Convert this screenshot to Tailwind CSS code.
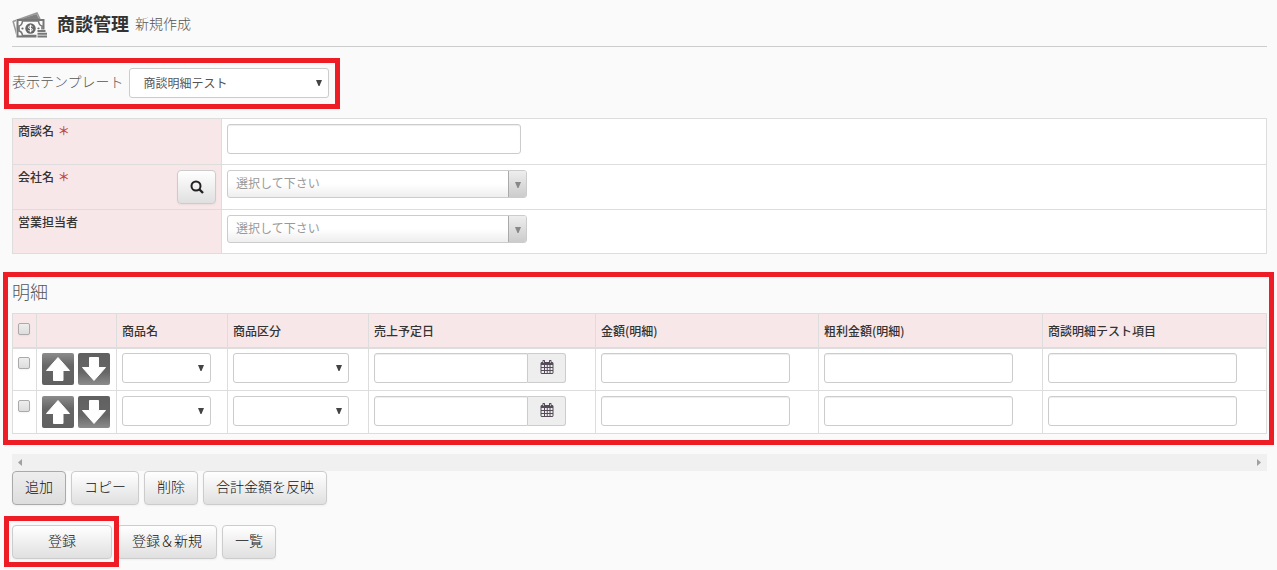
<!doctype html>
<html lang="ja">

<head>
  <meta charset="UTF-8" />
  <meta name="viewport" content="width=device-width, initial-scale=1.0" />
  <title>商談管理 新規作成</title>
  <script src="https://cdn.jsdelivr.net/npm/@tailwindcss/browser@4"></script>
</head>

<body class="min-h-screen bg-[#fafafa] pl-3 pr-[10px] font-['Noto_Sans_CJK_JP',sans-serif] text-xs text-[#333]">
  <!-- Shared icons -->
  <svg class="hidden" xmlns="http://www.w3.org/2000/svg">
    <symbol id="icon-up" viewBox="0 0 32 32">
      <path d="M16 4.500 27.500 17.500H21V27.500H11.500V17.500H4.500Z" fill="#fff" stroke="#fff" stroke-linejoin="round" />
    </symbol>
    <symbol id="icon-down" viewBox="0 0 32 32">
      <path d="M16 27.500 4.500 14.500H11.500V4.500H20.500V14.500H27.500Z" fill="#fff" stroke="#fff" stroke-linejoin="round" />
    </symbol>
    <symbol id="icon-caret" viewBox="0 0 6 6">
      <path d="M0 0h6L3.500 6h-1z" fill="currentColor" />
    </symbol>
    <symbol id="icon-calendar" viewBox="0 0 14 14">
      <path fill="currentColor" fill-rule="evenodd"
        d="M3 0h1.500L5 .5V2h4V.5L9.500 0H11l.5.5V2H12.500l1 1v10l-1 1h-11l-1-1V3l1-1h1V.5ZM1.500 5v2H4V5ZM5 5v2h1.800V5ZM7.700 5v2h1.800V5ZM10.500 5v2h2V5ZM1.500 8v2H4V8ZM5 8v2h1.800V8ZM7.700 8v2h1.800V8ZM10.500 8v2h2V8ZM1.500 11v2H4v-2ZM5 11v2h1.800v-2ZM7.700 11v2h1.800v-2ZM10.500 11v2h2v-2ZM3.300 1v2h.6V1ZM10 1v2h.6V1Z" />
    </symbol>
  </svg>

  <header class="flex h-[47px] items-center border-b border-[#ccc]">
    <svg class="mr-[9px] mt-1 h-7 w-9 shrink-0" viewBox="0 0 36 28" fill="none" aria-hidden="true">
      <path d="M1 10.500 25 2 28 8" stroke="#999" stroke-width="1.500" />
      <path d="M8 8.500 24.500 3 27.500 8.500Z" fill="#808080" />
      <path d="M1 10 5 24.500" stroke="#999" stroke-width="1.500" />
      <path d="M4 8H32.500V27H4Z" fill="#fafafa" />
      <path d="M5.500 9H31.500V25.500H5.500Z" stroke="#777" stroke-width="2" />
      <path d="M7 15Q10 14.500 10.500 10H26.500Q27 14.500 30 15V20Q27 20.500 26.500 24.500H10.500Q10 20.500 7 20Z" stroke="#777" stroke-width="1.600" />
      <circle cx="10.500" cy="17.500" r="1.100" fill="#666" />
      <circle cx="26.500" cy="17.500" r="1.100" fill="#666" />
      <circle cx="18.500" cy="17.500" r="5.200" fill="#666" />
      <path d="M20.500 15.700Q20 14.800 18.500 14.800T16.600 16.100 18.500 17.500 20.400 18.900 18.500 20.200 16.500 19.200M18.500 13.700V21.300" stroke="#fff" />
      <path d="M24.500 18.500H36V27H24.500Z" fill="#fafafa" />
      <path d="M25.500 20H33.500M25.500 22.800H35M25.500 25.600H35" stroke="#777" stroke-width="2" />
    </svg>
    <h1 class="text-lg font-bold">商談管理</h1>
    <span class="ml-[6px] text-sm font-light text-[#555]">新規作成</span>
  </header>

  <main>
    <form>
      <!-- Template switcher -->
      <div class="relative mt-[21px] inline-flex items-center align-top">
        <label for="template" class="mr-[5px] pb-1 text-sm font-light text-[#555]">表示テンプレート</label>
        <div class="relative">
          <select id="template" class="h-[30px] w-[200px] appearance-none rounded-[3px] border border-[#ccc] bg-white pl-[14px] pr-6 text-xs text-[#555]">
            <option>商談明細テスト</option>
          </select>
          <svg class="pointer-events-none absolute right-[7px] top-3 h-[6px] w-[6px] text-[#444]"><use href="#icon-caret" /></svg>
        </div>
        <div class="pointer-events-none absolute -bottom-[11px] -left-[8px] -right-[11px] -top-[10px] border-5 border-[#ee1c24]"></div>
      </div>

      <!-- Deal fields -->
      <table class="mt-5 w-full table-fixed border-collapse bg-white">
        <colgroup>
          <col class="w-[209px]" />
          <col />
        </colgroup>
        <tbody>
          <tr class="h-[46px]">
            <th class="border border-[#ddd] bg-[#f7e7e8] px-[5px] py-1 text-left align-top font-medium"><label for="deal-name">商談名 <span class="ml-px text-[#b94a48]">＊</span></label></th>
            <td class="border border-[#ddd] p-[5px] align-top">
              <input id="deal-name" type="text" class="block h-[30px] w-[294px] rounded-[3px] border border-[#ccc] bg-white px-[6px] shadow-[inset_0_1px_1px_rgba(0,0,0,0.075)]" />
            </td>
          </tr>
          <tr class="h-[45px]">
            <th class="border border-[#ddd] bg-[#f7e7e8] px-[5px] text-left align-top font-medium">
              <div class="flex justify-between">
                <label for="company" class="pt-1">会社名 <span class="ml-px text-[#b94a48]">＊</span></label>
                <button type="button" aria-label="検索" class="mt-[5px] flex h-[34px] w-[39px] items-center justify-center rounded border border-[#ccc] bg-linear-to-b from-white to-[#e0e0e0] pb-px shadow-xs">
                  <svg class="h-[14px] w-[14px]" viewBox="0 0 14 14" fill="none" stroke="#222" stroke-width="2"><circle cx="6" cy="6" r="4.500" /><path d="m9 9 4 4" stroke-width="2.400" /></svg>
                </button>
              </div>
            </th>
            <td class="border border-[#ddd] p-[5px] align-top">
              <div class="relative w-[300px]">
                <select id="company" class="block h-7 w-full appearance-none rounded-[3px] border border-[#ccc] bg-linear-to-b from-white from-50% to-[#eee] pb-[2px] pl-2 text-xs text-[#999]">
                  <option>選択して下さい</option>
                </select>
                <span class="pointer-events-none absolute inset-y-px right-px flex w-[18px] items-center justify-center rounded-r-[2px] border-l border-[#aaa] bg-linear-to-b from-[#eee] to-[#ccc] pt-[2px] text-[#888]"><svg class="h-[6px] w-[6px]"><use href="#icon-caret" /></svg></span>
              </div>
            </td>
          </tr>
          <tr class="h-[44px]">
            <th class="border border-[#ddd] bg-[#f7e7e8] px-[5px] py-1 text-left align-top font-medium"><label for="sales-rep">営業担当者</label></th>
            <td class="border border-[#ddd] p-[5px] align-top">
              <div class="relative w-[300px]">
                <select id="sales-rep" class="block h-7 w-full appearance-none rounded-[3px] border border-[#ccc] bg-linear-to-b from-white from-50% to-[#eee] pb-[2px] pl-2 text-xs text-[#999]">
                  <option>選択して下さい</option>
                </select>
                <span class="pointer-events-none absolute inset-y-px right-px flex w-[18px] items-center justify-center rounded-r-[2px] border-l border-[#aaa] bg-linear-to-b from-[#eee] to-[#ccc] pt-[2px] text-[#888]"><svg class="h-[6px] w-[6px]"><use href="#icon-caret" /></svg></span>
              </div>
            </td>
          </tr>
        </tbody>
      </table>

      <!-- Line items -->
      <section class="relative mt-[23px]">
        <h2 class="h-9 text-lg/7 font-light text-[#555]">明細</h2>
        <table class="w-full table-fixed border-collapse bg-white">
          <colgroup>
            <col class="w-6" />
            <col class="w-20" />
            <col class="w-[111px]" />
            <col class="w-[141px]" />
            <col class="w-[227px]" />
            <col class="w-[223px]" />
            <col class="w-[224px]" />
            <col />
          </colgroup>
          <thead>
            <tr class="h-[34px] bg-[#f7e7e8] text-left">
              <th class="border border-b-2 border-[#ddd] pl-[5px] align-top"><input type="checkbox" aria-label="すべて選択" class="mt-[9px] block h-3 w-3 appearance-none rounded-[2px] border border-[#aaa] bg-linear-to-b from-[#eee] to-[#ddd] shadow-xs" /></th>
              <th class="border border-b-2 border-[#ddd]"></th>
              <th class="border border-b-2 border-[#ddd] px-[5px] pt-[2px] font-medium">商品名</th>
              <th class="border border-b-2 border-[#ddd] px-[5px] pt-[2px] font-medium">商品区分</th>
              <th class="border border-b-2 border-[#ddd] px-[5px] pt-[2px] font-medium">売上予定日</th>
              <th class="border border-b-2 border-[#ddd] px-[5px] pt-[2px] font-medium">金額(明細)</th>
              <th class="border border-b-2 border-[#ddd] px-[5px] pt-[2px] font-medium">粗利金額(明細)</th>
              <th class="border border-b-2 border-[#ddd] px-[5px] pt-[2px] font-medium">商談明細テスト項目</th>
            </tr>
          </thead>
          <tbody>
            <tr class="h-[43px]">
              <td class="border border-[#ddd] pl-[5px] align-top"><input type="checkbox" aria-label="1行目を選択" class="mt-2 block h-3 w-3 appearance-none rounded-[2px] border border-[#aaa] bg-linear-to-b from-[#eee] to-[#ddd] shadow-xs" /></td>
              <td class="border border-[#ddd] px-[5px] pt-1 align-top">
                <div class="flex gap-1">
                  <button type="button" aria-label="上へ" class="rounded-[2px] bg-linear-to-b from-[#8c8c8c] via-[#666] via-40% to-[#606060]"><svg class="block h-8 w-8"><use href="#icon-up" /></svg></button>
                  <button type="button" aria-label="下へ" class="rounded-[2px] bg-linear-to-b from-[#606060] via-[#666] via-60% to-[#8c8c8c]"><svg class="block h-8 w-8"><use href="#icon-down" /></svg></button>
                </div>
              </td>
              <td class="border border-[#ddd] px-[5px] pt-1 align-top">
                <div class="relative w-[89px]">
                  <select aria-label="商品名" class="block h-[30px] w-full appearance-none rounded-[3px] border border-[#ccc] bg-white"><option></option></select>
                  <svg class="pointer-events-none absolute right-[7px] top-3 h-[6px] w-[6px] text-[#444]"><use href="#icon-caret" /></svg>
                </div>
              </td>
              <td class="border border-[#ddd] px-[5px] pt-1 align-top">
                <div class="relative w-[116px]">
                  <select aria-label="商品区分" class="block h-[30px] w-full appearance-none rounded-[3px] border border-[#ccc] bg-white"><option></option></select>
                  <svg class="pointer-events-none absolute right-[7px] top-3 h-[6px] w-[6px] text-[#444]"><use href="#icon-caret" /></svg>
                </div>
              </td>
              <td class="border border-[#ddd] px-[5px] pt-1 align-top">
                <div class="flex h-[30px] w-[192px]">
                  <input type="text" aria-label="売上予定日" class="min-w-0 flex-1 rounded-l-[3px] border border-[#ccc] bg-white px-[6px] shadow-[inset_0_1px_1px_rgba(0,0,0,0.075)]" />
                  <button type="button" aria-label="カレンダー" class="flex w-[38px] items-center justify-center rounded-r-[3px] border border-l-0 border-[#ccc] bg-[#eee] pb-[2px] text-[#554a58]"><svg class="h-[14px] w-[14px]"><use href="#icon-calendar" /></svg></button>
                </div>
              </td>
              <td class="border border-[#ddd] px-[5px] pt-1 align-top"><input type="text" aria-label="金額(明細)" class="block h-[30px] w-[189px] rounded-[3px] border border-[#ccc] bg-white px-[6px] shadow-[inset_0_1px_1px_rgba(0,0,0,0.075)]" /></td>
              <td class="border border-[#ddd] px-[5px] pt-1 align-top"><input type="text" aria-label="粗利金額(明細)" class="block h-[30px] w-[189px] rounded-[3px] border border-[#ccc] bg-white px-[6px] shadow-[inset_0_1px_1px_rgba(0,0,0,0.075)]" /></td>
              <td class="border border-[#ddd] px-[5px] pt-1 align-top"><input type="text" aria-label="商談明細テスト項目" class="block h-[30px] w-[189px] rounded-[3px] border border-[#ccc] bg-white px-[6px] shadow-[inset_0_1px_1px_rgba(0,0,0,0.075)]" /></td>
            </tr>
            <tr class="h-[43px]">
              <td class="border border-[#ddd] pl-[5px] align-top"><input type="checkbox" aria-label="2行目を選択" class="mt-[9px] block h-3 w-3 appearance-none rounded-[2px] border border-[#aaa] bg-linear-to-b from-[#eee] to-[#ddd] shadow-xs" /></td>
              <td class="border border-[#ddd] px-[5px] pt-[5px] align-top">
                <div class="flex gap-1">
                  <button type="button" aria-label="上へ" class="rounded-[2px] bg-linear-to-b from-[#8c8c8c] via-[#666] via-40% to-[#606060]"><svg class="block h-8 w-8"><use href="#icon-up" /></svg></button>
                  <button type="button" aria-label="下へ" class="rounded-[2px] bg-linear-to-b from-[#606060] via-[#666] via-60% to-[#8c8c8c]"><svg class="block h-8 w-8"><use href="#icon-down" /></svg></button>
                </div>
              </td>
              <td class="border border-[#ddd] px-[5px] pt-[5px] align-top">
                <div class="relative w-[89px]">
                  <select aria-label="商品名" class="block h-[30px] w-full appearance-none rounded-[3px] border border-[#ccc] bg-white"><option></option></select>
                  <svg class="pointer-events-none absolute right-[7px] top-3 h-[6px] w-[6px] text-[#444]"><use href="#icon-caret" /></svg>
                </div>
              </td>
              <td class="border border-[#ddd] px-[5px] pt-[5px] align-top">
                <div class="relative w-[116px]">
                  <select aria-label="商品区分" class="block h-[30px] w-full appearance-none rounded-[3px] border border-[#ccc] bg-white"><option></option></select>
                  <svg class="pointer-events-none absolute right-[7px] top-3 h-[6px] w-[6px] text-[#444]"><use href="#icon-caret" /></svg>
                </div>
              </td>
              <td class="border border-[#ddd] px-[5px] pt-[5px] align-top">
                <div class="flex h-[30px] w-[192px]">
                  <input type="text" aria-label="売上予定日" class="min-w-0 flex-1 rounded-l-[3px] border border-[#ccc] bg-white px-[6px] shadow-[inset_0_1px_1px_rgba(0,0,0,0.075)]" />
                  <button type="button" aria-label="カレンダー" class="flex w-[38px] items-center justify-center rounded-r-[3px] border border-l-0 border-[#ccc] bg-[#eee] pb-[2px] text-[#554a58]"><svg class="h-[14px] w-[14px]"><use href="#icon-calendar" /></svg></button>
                </div>
              </td>
              <td class="border border-[#ddd] px-[5px] pt-[5px] align-top"><input type="text" aria-label="金額(明細)" class="block h-[30px] w-[189px] rounded-[3px] border border-[#ccc] bg-white px-[6px] shadow-[inset_0_1px_1px_rgba(0,0,0,0.075)]" /></td>
              <td class="border border-[#ddd] px-[5px] pt-[5px] align-top"><input type="text" aria-label="粗利金額(明細)" class="block h-[30px] w-[189px] rounded-[3px] border border-[#ccc] bg-white px-[6px] shadow-[inset_0_1px_1px_rgba(0,0,0,0.075)]" /></td>
              <td class="border border-[#ddd] px-[5px] pt-[5px] align-top"><input type="text" aria-label="商談明細テスト項目" class="block h-[30px] w-[189px] rounded-[3px] border border-[#ccc] bg-white px-[6px] shadow-[inset_0_1px_1px_rgba(0,0,0,0.075)]" /></td>
            </tr>
          </tbody>
        </table>
        <div class="pointer-events-none absolute -bottom-[11px] -left-[9px] -right-[7px] -top-[5px] border-5 border-[#ee1c24]"></div>
      </section>

      <!-- Horizontal scroll track -->
      <div class="mt-5 flex h-[17px] items-center justify-between bg-[#f0f0f0] px-[6px]">
        <svg class="h-[7px] w-1" viewBox="0 0 4 7"><path d="M4 0v7L0 3.500z" fill="#a0a0a0" /></svg>
        <svg class="h-[7px] w-1" viewBox="0 0 4 7"><path d="M0 0v7l4-3.500z" fill="#a0a0a0" /></svg>
      </div>

      <div class="flex gap-[5px] text-sm font-light text-[#111]">
        <button type="button" class="h-[34px] rounded border border-[#aaa] bg-linear-to-b from-[#eee] to-[#ddd] px-3 pb-1 shadow-xs">追加</button>
        <button type="button" class="h-[34px] rounded border border-[#ccc] bg-linear-to-b from-white to-[#e0e0e0] px-3 pb-1 shadow-xs">コピー</button>
        <button type="button" class="h-[34px] rounded border border-[#ccc] bg-linear-to-b from-white to-[#e0e0e0] px-3 pb-1 shadow-xs">削除</button>
        <button type="button" class="h-[34px] rounded border border-[#ccc] bg-linear-to-b from-white to-[#e0e0e0] px-3 pb-1 shadow-xs">合計金額を反映</button>
      </div>

      <div class="mt-5 flex gap-[5px] text-sm font-light text-[#111]">
        <div class="relative z-10">
          <button type="submit" class="h-[34px] w-[100px] rounded border border-[#ccc] bg-linear-to-b from-white to-[#e0e0e0] pb-1 shadow-xs">登録</button>
          <div class="pointer-events-none absolute -bottom-[8px] -left-[8px] -right-[7px] -top-[9px] border-5 border-[#ee1c24]"></div>
        </div>
        <button type="submit" class="h-[34px] w-[100px] rounded border border-[#ccc] bg-linear-to-b from-white to-[#e0e0e0] pb-1 shadow-xs">登録＆新規</button>
        <button type="button" class="h-[34px] rounded border border-[#ccc] bg-linear-to-b from-white to-[#e0e0e0] px-3 pb-1 shadow-xs">一覧</button>
      </div>
    </form>
  </main>
</body>

</html>
